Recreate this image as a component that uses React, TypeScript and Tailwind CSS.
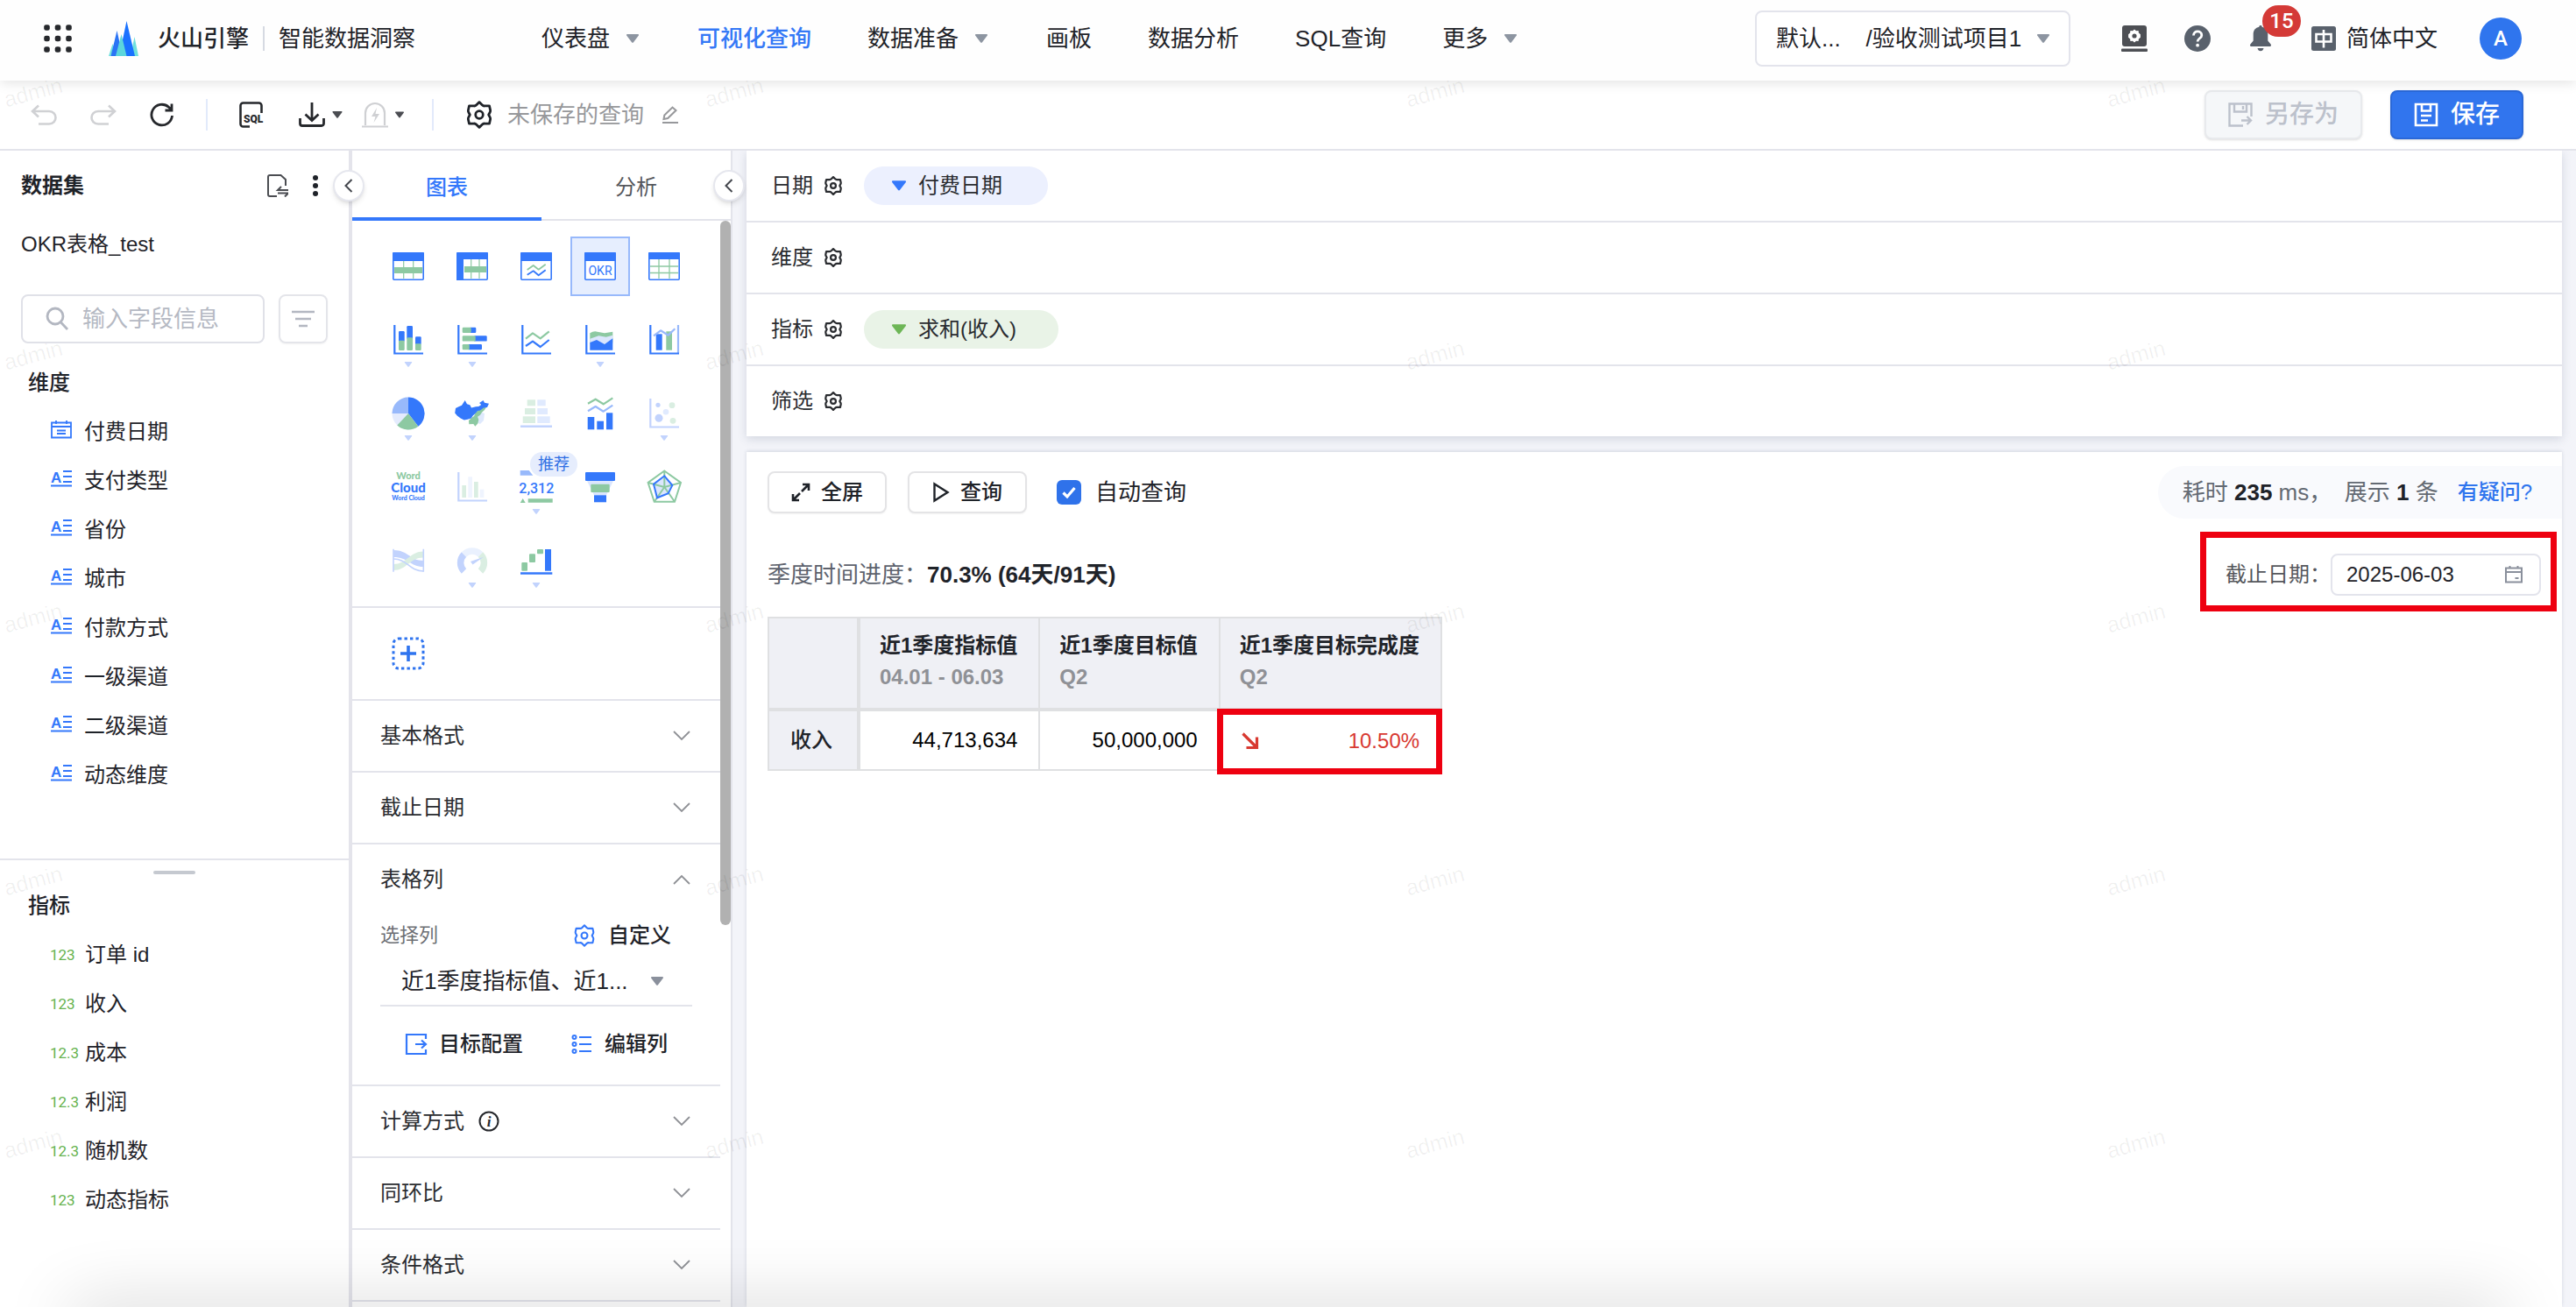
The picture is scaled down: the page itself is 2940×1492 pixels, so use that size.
import React from "react";

const BLUE = "#3478fb";
const GREEN = "#8dc9a2";
const SOFT = "#c2d3fd";
const MID = "#98b9fb";
const PALE_GREEN = "#daeee2";
const PALE_BLUE = "#e0eafe";

/* ---------- small shared icons ---------- */

function Caret({ className = "" }: { className?: string }) {
  return (
    <svg viewBox="0 0 14 10" className={`shrink-0 ${className}`} fill="currentColor" aria-hidden="true">
      <path d="M1 0h12c.9 0 1.3 1 .7 1.700L7.800 9.400c-.4.5-1.200.5-1.600 0L.3 1.700C-.3 1 .1 0 1 0z" />
    </svg>
  );
}

function Gear({ className = "", stroke = 2.4 }: { className?: string; stroke?: number }) {
  return (
    <svg viewBox="0 0 30 30" className={`shrink-0 ${className}`} fill="none" stroke="currentColor" strokeWidth={stroke} strokeLinejoin="round" aria-hidden="true">
      <path d="M12 4.500 15 1.500l3 3c.8.800 1.700 1.200 2.800 1.100l5-.100 1 4.500c.2 1 .1 1.600-.4 2.400L25 15l1.400 2.600c.5.8.6 1.400.4 2.400l-1 4.500-5-.1c-1.100-.1-2 .3-2.800 1.100l-3 3-3-3c-.8-.8-1.700-1.200-2.800-1.100l-5 .1-1-4.500c-.2-1-.1-1.600.4-2.400L5 15l-1.400-2.600c-.5-.8-.6-1.400-.4-2.400l1-4.500 5 .1c1.100.1 2-.3 2.800-1.100z" />
      <circle cx="15" cy="15" r="4" />
    </svg>
  );
}

function Chevron({ up = false }: { up?: boolean }) {
  return (
    <svg viewBox="0 0 20 12" className="h-3 w-5" fill="none" stroke="#8f9196" strokeWidth="1.800" aria-hidden="true">
      <path d={up ? "M1 11 10 2l9 9" : "M1 1l9 9 9-9"} />
    </svg>
  );
}

function Collapse({ label }: { label: string }) {
  return (
    <button aria-label={label} className="flex size-9 items-center justify-center rounded-full border-2 border-[#e6e7ee] bg-white shadow-md">
      <svg viewBox="0 0 10 16" className="h-4 w-2.5" fill="none" stroke="#43464d" strokeWidth="2">
        <path d="M8.500 1 1.500 8l7 7" />
      </svg>
    </button>
  );
}

/* ---------- header ---------- */

function Header() {
  const items = [
    { text: "仪表盘", menu: true },
    { text: "可视化查询", active: true },
    { text: "数据准备", menu: true },
    { text: "画板" },
    { text: "数据分析" },
    { text: "SQL查询" },
    { text: "更多", menu: true },
  ];
  return (
    <header className="relative z-20 flex h-[92px] shrink-0 items-center bg-[#fefefe] pr-[62px] pb-1 pl-[50px] text-[26px] leading-9 text-[#1f2329] shadow-[0_2px_14px_rgba(0,0,0,0.12)]">
      <button aria-label="应用">
        <svg viewBox="0 0 32 32" className="size-8" fill="#26282c">
          {[3.500, 16, 28.500].map((y) => [3.500, 16, 28.500].map((x) => <rect key={`${x}-${y}`} x={x - 3.300} y={y - 3.300} width="6.600" height="6.600" rx="2.400" />))}
        </svg>
      </button>
      <svg viewBox="0 0 34 40" className="ml-[42px] h-10 w-[34px]" aria-hidden="true">
        <path d="M0 40 4.500 26 9 40z" fill="#6fe0dd" />
        <path d="M25 40 29.500 18 34 40z" fill="#6fe0dd" />
        <path d="M2.500 40 9.500 11 16 40z" fill="#2b74f5" />
        <path d="M12 40 20.500 0 30 40z" fill="#1a72ff" />
        <path d="M8 40 14.500 15 20.500 40z" fill="#5cd6dc" />
      </svg>
      <span className="ml-[22px] font-medium">火山引擎</span>
      <span className="mx-4 h-7 w-0.5 bg-[#d6dae2]" />
      <span>智能数据洞察</span>
      <nav className="ml-36 flex items-center gap-16">
        {items.map((it) => (
          <a key={it.text} href="#" className={it.active ? "font-medium text-[#3478f6]" : ""}>
            <span className="flex items-center">
              {it.text}
              {it.menu && <Caret className="mr-[3px] ml-[19px] h-2.5 w-3.5 text-[#8d95a1]" />}
            </span>
          </a>
        ))}
      </nav>
      <div className="relative ml-auto flex items-center">
        <select aria-label="项目" className="h-16 w-[360px] appearance-none rounded-lg border-2 border-[#e3e4ec] bg-white pl-[22px]">
          <option>默认...{"\u00a0\u00a0\u00a0\u00a0"}/验收测试项目1</option>
        </select>
        <Caret className="pointer-events-none absolute right-6 h-2.5 w-3.5 text-[#8d95a1]" />
      </div>
      <button aria-label="系统设置" className="ml-[58px]">
        <svg viewBox="0 0 30 30" className="size-[30px]" fill="#4d4f54">
          <rect x="1" y="0" width="28" height="24" rx="3" />
          <rect x="0" y="26.500" width="30" height="3.500" rx="1" />
          <path d="m15 4.500 2 1.700 2.600-.2.300 2.600 2 1.700v3.400l-2 1.700-.3 2.600-2.600-.2-2 1.700-2-1.700-2.600.2-.3-2.600-2-1.700v-3.400l2-1.700.3-2.600 2.600.2z" fill="#fff" />
          <circle cx="15" cy="12" r="2.600" />
        </svg>
      </button>
      <button aria-label="帮助" className="ml-[42px]">
        <svg viewBox="0 0 30 30" className="size-[30px]">
          <circle cx="15" cy="15" r="15" fill="#59616c" />
          <path d="M10.500 11.500c0-6.300 9.300-5.800 9.300-.3 0 3.600-4.700 3.500-4.700 7.300" fill="none" stroke="#fff" strokeWidth="2.800" />
          <circle cx="15.100" cy="22.700" r="1.900" fill="#fff" />
        </svg>
      </button>
      <button aria-label="通知" className="relative ml-[43px]">
        <svg viewBox="0 0 28 30" className="h-[30px] w-7" fill="#59616c">
          <path d="M14 0c1 0 1.700.7 1.700 1.700 4.300.9 6.600 4 6.600 8.300v7.500l3.500 4.200c.5.700 0 2.300-.9 2.300H3.100c-.9 0-1.400-1.600-.9-2.300l3.500-4.200V10c0-4.300 2.300-7.400 6.600-8.300C12.300.7 13 0 14 0z" />
          <path d="M10.500 26h7c-.4 2-1.700 3.300-3.500 3.300S10.900 28 10.500 26z" />
        </svg>
        <span className="absolute -top-[23px] left-4 flex h-9 w-11 items-center justify-center rounded-full bg-[#d43a37] font-['Roboto'] text-2xl font-medium text-white">15</span>
      </button>
      <button className="ml-11 flex items-center">
        <svg viewBox="0 0 28 28" className="size-7">
          <rect width="28" height="28" rx="2.500" fill="#59616c" />
          <path d="M5.500 9h17v8.500h-17zM14 4v20.500" fill="none" stroke="#fff" strokeWidth="2.600" />
        </svg>
        <span className="ml-3">简体中文</span>
      </button>
      <button className="ml-12 flex size-12 items-center justify-center rounded-full bg-[#2f75ee] font-['Roboto'] text-2xl font-medium text-white">A</button>
    </header>
  );
}

/* ---------- toolbar ---------- */

function Toolbar() {
  return (
    <div className="z-10 flex h-20 shrink-0 items-center border-b-2 border-[#e3e4eb] bg-white pr-[60px] pl-[35px] text-[26px] leading-9">
      <button aria-label="撤销">
        <svg viewBox="0 0 30 24" className="h-6 w-[30px]" fill="none" stroke="#d0d1d4" strokeWidth="2.600">
          <path d="M9 1.500 2 8l7 6.500M2 8h19c10 0 10 14.500 0 14.500H9" />
        </svg>
      </button>
      <button aria-label="重做" className="ml-[38px]">
        <svg viewBox="0 0 30 24" className="h-6 w-[30px]" fill="none" stroke="#d0d1d4" strokeWidth="2.600">
          <path d="m21 1.500 7 6.500-7 6.500M28 8H9c-10 0-10 14.500 0 14.500h12" />
        </svg>
      </button>
      <button aria-label="刷新" className="ml-[38px]">
        <svg viewBox="0 0 28 28" className="size-7" fill="none" stroke="#26282c" strokeWidth="2.800">
          <path d="M25.500 15A11.800 11.800 0 1 1 21.500 5.200L24.500 8M25 1.500V9h-7.500" />
        </svg>
      </button>
      <span className="mx-9 h-9 w-0.5 bg-[#e2eafb]" />
      <button aria-label="SQL">
        <svg viewBox="0 0 30 30" className="size-[30px]" fill="none" stroke="#26282c" strokeWidth="2.600">
          <path d="M12 28.500H4.500a3 3 0 0 1-3-3v-21a3 3 0 0 1 3-3h18a3 3 0 0 1 3 3V13" />
          <text x="5" y="24" fill="#26282c" stroke="none" fontFamily="Roboto" fontWeight="900" fontSize="12">SQL</text>
        </svg>
      </button>
      <button aria-label="下载" className="ml-[38px] flex items-center">
        <svg viewBox="0 0 30 28" className="h-7 w-[30px]" fill="none" stroke="#26282c" strokeWidth="2.800">
          <path d="M15 0v20M7.500 13.500l7.500 7 7.500-7M1.500 18v6a2.500 2.500 0 0 0 2.500 2.500h22a2.500 2.500 0 0 0 2.500-2.500v-6" />
        </svg>
        <Caret className="ml-2 h-2 w-3 text-[#4b4d52]" />
      </button>
      <button aria-label="预警" className="ml-[22px] flex items-center">
        <svg viewBox="0 0 30 30" className="size-[30px]" fill="none" stroke="#cfd0d3" strokeWidth="2.200">
          <path d="M4 27V13a11 11 0 0 1 22 0v14M0 28.500h30" />
          <path d="m17 7-6 10h4.500L13.500 24l6.500-10h-4.500z" fill="#cfd0d3" stroke="none" />
        </svg>
        <Caret className="ml-2 h-2 w-2.5 text-[#4b4d52]" />
      </button>
      <span className="mr-9 ml-8 h-9 w-0.5 bg-[#e2eafb]" />
      <button aria-label="查询设置"><Gear className="size-8" stroke={2.600} /></button>
      <span className="ml-4 text-[#97989b]">未保存的查询</span>
      <button aria-label="重命名" className="ml-5">
        <svg viewBox="0 0 20 20" className="size-5" fill="none" stroke="#97989b" strokeWidth="2">
          <path d="m2.500 15 .8-4.500L12.500 1.500l4 3.500-9.300 9zM1 19h18" />
        </svg>
      </button>
      <div className="ml-auto flex items-center gap-8 text-[28px] font-medium">
        <button disabled className="flex h-14 w-[180px] items-center justify-center gap-3.5 rounded-lg border-2 border-[#e8eaed] bg-[#f5f7f9] text-[#bcc1cb] shadow-sm">
          <svg viewBox="0 0 28 28" className="size-7" fill="none" stroke="currentColor" strokeWidth="2.400">
            <path d="M17 26.500H1.500v-25h25V16M7 2v8.500h14V2M17 4v4M15 20.500h11M21.500 16l4.500 4.500-4.500 4.500" />
          </svg>
          另存为
        </button>
        <button className="flex h-14 w-[152px] items-center justify-center gap-3.5 rounded-lg border-2 border-[#2b68d8] bg-[#3175ee] text-white shadow-sm">
          <svg viewBox="0 0 28 28" className="size-7" fill="none" stroke="currentColor" strokeWidth="2.600">
            <path d="M2 2h24v24H2zM9 2v7.500h10V2M8 15h12M8 20.500h8" />
          </svg>
          保存
        </button>
      </div>
    </div>
  );
}

/* ---------- dataset panel ---------- */

function DateFieldIcon() {
  return (
    <svg viewBox="0 0 24 24" className="size-6" fill="none" stroke={BLUE} strokeWidth="1.800" aria-hidden="true">
      <path d="M1 3.500h22v17H1zM1 8h22M6 1v4M18 1v4M7 12.500h10M7 16h10" />
    </svg>
  );
}

function TextFieldIcon() {
  return (
    <svg viewBox="0 0 24 24" className="size-6" stroke={BLUE} strokeWidth="1.800" aria-hidden="true">
      <path d="M14 3h10M14 9h10M14 15h10M0 19.500h24" />
      <text x="0" y="15.500" fill={BLUE} stroke="none" fontFamily="Liberation Sans" fontWeight="700" fontSize="17">A</text>
    </svg>
  );
}

function DatasetPanel() {
  const dims = ["付费日期", "支付类型", "省份", "城市", "付款方式", "一级渠道", "二级渠道", "动态维度"];
  const measures = [
    ["123", "订单 id"],
    ["123", "收入"],
    ["12.3", "成本"],
    ["12.3", "利润"],
    ["12.3", "随机数"],
    ["123", "动态指标"],
  ];
  return (
    <aside className="relative flex w-[402px] shrink-0 flex-col border-r-4 border-[#e4e4eb] bg-white">
      <div className="flex h-20 items-center pr-[35px] pl-6">
        <h2 className="font-bold">数据集</h2>
        <button aria-label="切换数据集" className="ml-auto">
          <svg viewBox="0 0 24 26" className="h-[26px] w-6" fill="none" stroke="#4b4d52" strokeWidth="2">
            <path d="M11 25H3a2 2 0 0 1-2-2V3a2 2 0 0 1 2-2h12.500L21 6v7" />
            <path d="M24 18H12l4-4M12 21.500h12l-4 4" />
          </svg>
        </button>
        <button aria-label="更多" className="ml-7">
          <svg viewBox="0 0 6 26" className="h-[26px] w-1.5" fill="#1f2329">
            <circle cx="3" cy="4" r="3" /><circle cx="3" cy="13" r="3" /><circle cx="3" cy="22" r="3" />
          </svg>
        </button>
      </div>
      <div className="flex h-[53px] items-center pl-6">OKR表格_test</div>
      <div className="mt-[31px] flex h-14 gap-4 px-6">
        <label className="flex w-[278px] items-center gap-4 rounded-lg border-2 border-[#e0e1e8] pl-[26px]">
          <svg viewBox="0 0 26 28" className="h-7 w-[26px] shrink-0" fill="none" stroke="#b3b7c1" strokeWidth="2.800">
            <circle cx="11" cy="11" r="9" /><path d="m17.500 18 7.500 8" />
          </svg>
          <input aria-label="搜索字段" placeholder="输入字段信息" className="w-full min-w-0 text-[26px] leading-9 outline-none placeholder:text-[#b5b9c3]" />
        </label>
        <button aria-label="筛选字段" className="flex w-14 items-center justify-center rounded-lg border-2 border-[#e4e5ea] shadow-xs">
          <svg viewBox="0 0 26 20" className="h-5 w-[26px]" stroke="#b3b7c1" strokeWidth="2.600">
            <path d="M0 2h26M4 10h18M8 18h10" />
          </svg>
        </button>
      </div>
      <h3 className="mt-[25px] flex h-10 items-center pl-8 font-medium">维度</h3>
      <ul className="mt-2 pb-[67px]">
        {dims.map((d, i) => (
          <li key={d} className="flex h-14 items-center gap-[14px] pl-[58px]">
            <span className="pb-1">{i === 0 ? <DateFieldIcon /> : <TextFieldIcon />}</span>
            {d}
          </li>
        ))}
      </ul>
      <section className="flex-1 border-t-2 border-[#e3e4eb]">
        <div className="mx-auto mt-3 h-1 w-12 rounded-full bg-[#c5c9d0]" />
        <h3 className="mt-4 flex h-10 items-center pl-8 font-medium">指标</h3>
        <ul className="mt-2">
          {measures.map(([kind, name]) => (
            <li key={name} className="flex h-14 items-center pl-[57px]">
              <span className="w-10 font-['Roboto'] text-[17px] leading-6 text-[#67b34f]">{kind}</span>
              {name}
            </li>
          ))}
        </ul>
      </section>
      <div className="absolute top-[22px] -right-[18px] z-10"><Collapse label="收起数据集" /></div>
    </aside>
  );
}

/* ---------- chart picker ---------- */

function Axis({ color = BLUE }: { color?: string }) {
  return <path d="M4.300 3v32.500H37" fill="none" stroke={color} strokeWidth="2.200" />;
}

function Line({ d, color, w = 2.200 }: { d: string; color: string; w?: number }) {
  return <path d={d} fill="none" stroke={color} strokeWidth={w} strokeLinejoin="round" />;
}

function Frame({ head = 12 }: { head?: number }) {
  return (
    <>
      <rect x="2.800" y="4.800" width="34.400" height="30.400" rx="1" fill="#fff" stroke={BLUE} strokeWidth="1.600" />
      <rect x="2" y="4" width="36" height={head - 4} rx="1" fill={BLUE} />
    </>
  );
}

const charts: { name: string; menu?: boolean; selected?: boolean; tag?: string; art: React.ReactNode }[] = [
  { name: "明细表", art: <><Frame head={14} /><path d="M14.700 14v20M25.700 14v20" stroke={GREEN} strokeWidth="1.200" /><rect x="4" y="21" width="32" height="7" fill={GREEN} /></> },
  { name: "透视表", art: <><Frame /><rect x="2" y="5" width="8" height="31" fill={BLUE} /><path d="M18.700 12v22M28 12v22" stroke={GREEN} strokeWidth="1.200" /><rect x="11" y="20" width="25" height="7" fill={GREEN} /></> },
  { name: "趋势表", art: <><Frame head={14} /><Line d="M9.700 24 16.700 19l6 4.700 8-6" color={GREEN} w={1.800} /><Line d="m9.700 29.700 7-4.400 6 5 8-6" color={BLUE} w={1.800} /></> },
  { name: "OKR表", selected: true, art: <><Frame head={14} /><text x="20" y="30" textAnchor="middle" fontFamily="Roboto" fontSize="14" fill={BLUE}>OKR</text></> },
  { name: "多维表", art: <><Frame /><path d="M4 20h32M4 27.500h32M14 12v22M26 12v22" stroke={GREEN} strokeWidth="1.300" /></> },

  { name: "柱状图", menu: true, art: <><Axis /><g fill={BLUE}><rect x="9" y="10" width="6.700" height="12" rx="1.200" /><rect x="18.300" y="4" width="6.700" height="15" rx="1.200" /><rect x="28" y="16.300" width="6.700" height="9" rx="1.200" /></g><g fill={GREEN}><rect x="9" y="20.700" width="6.700" height="11.300" rx="1.200" /><rect x="18.300" y="17.300" width="6.700" height="14.700" rx="1.200" /><rect x="28" y="24.300" width="6.700" height="7.700" rx="1.200" /></g></> },
  { name: "条形图", menu: true, art: <><Axis /><g fill={BLUE}><rect x="17" y="5.700" width="7.300" height="6.300" rx="1.200" /><rect x="22" y="15.300" width="14.700" height="6.300" rx="1.200" /><rect x="15" y="25" width="16" height="6.300" rx="1.200" /></g><g fill={GREEN}><rect x="8.700" y="5.700" width="10" height="6.300" rx="1.200" /><rect x="8.700" y="15.300" width="15" height="6.300" rx="1.200" /><rect x="8.700" y="25" width="8" height="6.300" rx="1.200" /></g></> },
  { name: "折线图", art: <><Axis /><Line d="m8 18.700 8-6.400 8.700 6 10-8" color={GREEN} /><Line d="m8 27 8-5.300 8.700 6.300 10-8" color={BLUE} /></> },
  { name: "面积图", menu: true, art: <><Axis /><path d="M8.300 12.300q4.500-2.800 8.400-1.600l8.300 1.600 9.300-1.600V23h-26z" fill={GREEN} /><path d="m8.300 18.700 10-3.400 8.400 1.400 7.600-2V25h-26z" fill="#dbe6fd" /><path d="m8.300 23 7.700-3 9 5 9.300-6.700v13.400h-26z" fill={BLUE} /></> },
  { name: "双轴图", art: <><path d="M36 3v32" stroke={MID} strokeWidth="2.200" /><Axis /><rect x="10.700" y="13.300" width="7" height="18.400" fill={BLUE} /><rect x="22.300" y="10.300" width="6.700" height="21.400" fill={GREEN} /><Line d="m8 15.300 8-6 8.700 5.400 7.600-7.400" color={MID} /></> },

  { name: "饼图", menu: true, art: <><circle cx="20" cy="20" r="18.500" fill="#e4ebfd" /><path d="M20 20V1.500A18.500 18.500 0 0 1 31.300 34.700z" fill={BLUE} /><path d="M20 20 31.300 34.700A18.500 18.500 0 0 1 7.300 33.400z" fill={GREEN} /><path d="M20 20H1.500A18.500 18.500 0 0 1 20 1.500z" fill={MID} /></> },
  { name: "地图", menu: true, art: <><path d="m29 18 5 2-1 8-4 4-5-2 1-8z" fill="#dfe9fd" /><path d="m37 11-3 5-3 2.700-2 3-3 2 1.300 3.300-1 4.500-3 3.200-2-2.700-5 .3-.3-4.300 3-3 3-2 2-4.500 5-3.500 4.500-2.500z" fill={GREEN} /><path d="m1 14 4-2 3-1.300L11.700 5l2.300 4.300 3.300 1L19 13.500l5-1.300 3.300-.2 3-2-2.300-2L32.500 5l1.500 2.700 5 1-2 4.300-4 .5-4 3-2.800.5-2.700 3-2.800 2.500-2 3-4 1.300-4 .7-4-2-4-3-2.500-3z" fill={BLUE} /></> },
  { name: "对比图", art: <><g fill={PALE_GREEN}><rect x="9.700" y="4.300" width="9.300" height="7" /><rect x="7" y="14" width="12" height="7" /><rect x="4.700" y="23.300" width="14.300" height="7.700" /></g><g fill={PALE_BLUE}><rect x="21.300" y="4.300" width="9.400" height="7" /><rect x="21.300" y="14" width="11.700" height="7" /><rect x="21.300" y="23.300" width="14.400" height="7.700" /></g><path d="M2 34.700h36" stroke={SOFT} strokeWidth="2.400" /></> },
  { name: "组合图", art: <><Line d="m6 8.700 8.700-5 9 5.600 10.600-7" color={GREEN} /><Line d="m6 17.300 8.700-5.300 9 5.700 10.600-7" color={MID} /><g fill={BLUE}><rect x="5.700" y="24" width="7.600" height="14.300" /><rect x="16.300" y="28.700" width="7.700" height="9.600" /><rect x="27" y="19.300" width="7.300" height="19" /></g></> },
  { name: "散点图", menu: true, art: <><Axis color={SOFT} /><g fill={SOFT}><circle cx="13" cy="10.300" r="2.600" /><circle cx="14" cy="25.300" r="4.500" /></g><circle cx="22" cy="18.300" r="3.300" fill={PALE_BLUE} /><g fill={PALE_GREEN}><circle cx="29" cy="10.700" r="3.400" /><circle cx="30" cy="28.300" r="3.400" /></g></> },

  { name: "词云", art: <g fontFamily="Lato" fontWeight="900" textAnchor="middle"><text x="20" y="10.500" fontSize="11" fill={GREEN}>Word</text><text x="20" y="26" fontSize="15" fill={BLUE}>Cloud</text><text x="20" y="35" fontSize="7" fill={BLUE}>Word Cloud</text></g> },
  { name: "直方图", art: <><Axis color={SOFT} /><g fill={PALE_GREEN}><rect x="8.300" y="18" width="4.700" height="14" /><rect x="22" y="14" width="4.700" height="18" /></g><g fill="#eff4fe"><rect x="15.300" y="8.300" width="4.700" height="23.700" /><rect x="28.700" y="22.700" width="4.700" height="9.300" /></g></> },
  { name: "指标卡", menu: true, tag: "推荐", art: <><path d="M1.700 1h10l4.600 5.700H1.700z" fill={MID} /><text x="20.300" y="26.500" textAnchor="middle" fontFamily="Roboto" fontWeight="500" fontSize="16" fill={BLUE}>2,312</text><path d="m1.700 38 3-5 3 5zM10.700 33.300h28v4.400h-28z" fill={GREEN} /></> },
  { name: "漏斗图", art: <><path d="M5 13h30l-8 16.300H13z" fill="#dbe6fd" /><rect x="3" y="3" width="34" height="10" rx="1" fill={BLUE} /><rect x="9.300" y="16.700" width="21.400" height="9.300" rx="1" fill={GREEN} /><rect x="13" y="29.300" width="14" height="8" fill={BLUE} /></> },
  { name: "雷达图", art: <><path d="m20.300 7.300 9 10.700-4.600 9.300-12.700 5-4-15.600z" fill="#dbe6fd" /><path d="M20.300 1.500 39 15l-7 21.700H8.700L1.600 15zM20.300 20V1.500M20.300 20 39 15M20.300 20 32 36.700M20.300 20 8.700 36.700M20.300 20 1.600 15" fill="none" stroke={GREEN} strokeWidth="2" /><path d="m20.300 7.300 9 10.700-4.600 9.300-12.700 5-4-15.600z" fill="none" stroke={BLUE} strokeWidth="2" /></> },

  { name: "桑基图", art: <><path d="M3 8C20 8 22 20 37.300 20v7C22 27 20 16 3 16z" fill={SOFT} /><path d="M3 24C18 24 22 9.500 37.300 9.500v7C22 16.500 18 31 3 31z" fill={PALE_GREEN} /><path d="M3 18c16 0 18 14 34.300 14" fill="none" stroke={SOFT} strokeWidth="1.600" /><path d="M3 6.700v26M37.300 6.700v26" stroke={SOFT} strokeWidth="1.600" /></> },
  { name: "仪表盘图", menu: true, art: <g fill="none" strokeWidth="7.500"><path d="M10.500 32a13.500 13.500 0 0 1 0-19" stroke={SOFT} /><path d="M10.500 13a13.500 13.500 0 0 1 19 0" stroke="#eaf1fe" /><path d="M29.500 13a13.500 13.500 0 0 1 0 19" stroke={PALE_GREEN} /><path d="m18 21 15-5.300L20.500 24.500z" fill={SOFT} stroke="none" /></g> },
  { name: "瀑布图", menu: true, art: <><g fill={GREEN}><rect x="3.300" y="22" width="6.700" height="9.700" rx="1" /><rect x="12" y="12.300" width="7" height="9.700" rx="1" /><rect x="21" y="7" width="7" height="5.300" rx="1" /></g><rect x="30" y="7" width="7" height="24.700" fill={BLUE} /><path d="M2 34.500h36.300" stroke={BLUE} strokeWidth="2.400" /></> },
];

function SectionRow({ title, info, open }: { title: string; info?: boolean; open?: boolean }) {
  return (
    <button aria-expanded={!!open} className={`flex w-full items-center pr-[34px] pl-8 text-[#2a2c30] ${open ? "h-20" : "h-[82px]"}`}>
      {title}
      {info && (
        <svg viewBox="0 0 24 24" className="ml-4 size-6" fill="none" stroke="#26282c" strokeWidth="2">
          <circle cx="12" cy="12" r="10.500" />
          <text x="12" y="18" textAnchor="middle" fill="#26282c" stroke="none" fontFamily="Liberation Serif" fontStyle="italic" fontWeight="700" fontSize="17">i</text>
        </svg>
      )}
      <span className="ml-auto"><Chevron up={open} /></span>
    </button>
  );
}

function ChartPanel() {
  return (
    <aside className="relative flex w-[434px] shrink-0 flex-col border-r-2 border-[#e3e4eb] bg-white">
      <div role="tablist" className="flex h-20 shrink-0 border-b-2 border-[#e3e4eb]">
        <button role="tab" aria-selected="true" className="-mb-0.5 flex-1 border-b-4 border-[#3478fb] pt-2 font-medium text-[#3478fb]">图表</button>
        <button role="tab" aria-selected="false" className="flex-1 pt-1.5 text-[#55575c]">分析</button>
      </div>
      <div className="flex min-h-0 flex-1">
        <div className="min-w-0 flex-1 divide-y-2 divide-[#e3e4eb] overflow-hidden">
          <div className="grid grid-cols-[repeat(5,73px)] pt-2.5 pb-2.5 pl-[27px]">
            {charts.map((c) => (
              <button key={c.name} aria-label={c.name} aria-pressed={!!c.selected} className="relative flex h-[84px] items-center justify-center">
                <span className={c.selected ? "flex size-[68px] items-center justify-center border-2 border-[#98b9fb] bg-[#e6eefe]" : "flex size-[68px] items-center justify-center"}>
                  <svg viewBox="0 0 40 40" className="size-10 overflow-visible" aria-hidden="true">{c.art}</svg>
                </span>
                {c.menu && <Caret className="absolute top-[67px] h-1.5 w-2.5 text-[#c2d3fd]" />}
                {c.tag && <span className="absolute top-0.5 left-[30px] rounded-full bg-[#e6edfd] px-[9px] text-lg leading-7 whitespace-nowrap text-[#2f6fe4]">{c.tag}</span>}
              </button>
            ))}
          </div>
          <div className="flex h-[106px] items-center pl-11">
            <button aria-label="添加图表">
              <svg viewBox="0 0 40 40" className="size-10" fill="none" stroke="#2f74ef">
                <rect x="3" y="3" width="34" height="34" rx="6" strokeWidth="3" strokeDasharray="3.400 3.100" />
                <path d="M20 11v18M11 20h18" strokeWidth="3.600" />
              </svg>
            </button>
          </div>
          <SectionRow title="基本格式" />
          <SectionRow title="截止日期" />
          <section>
            <SectionRow title="表格列" open />
            <div className="px-8">
              <div className="flex h-12 items-center">
                <label htmlFor="columns" className="text-[22px] text-[#6d6f74]">选择列</label>
                <button className="ml-auto flex items-center gap-[14px] pr-[24px] font-medium text-[#1f2329]">
                  <Gear className="size-[26px] text-[#3478fb]" />
                  自定义
                </button>
              </div>
              <div className="relative flex h-[57px] items-center border-b-2 border-[#e3e4eb]">
                <select id="columns" className="w-full appearance-none bg-transparent pl-6 text-[26px] leading-9">
                  <option>近1季度指标值、近1...</option>
                </select>
                <Caret className="pointer-events-none absolute right-8 h-2.5 w-4 text-[#8a909c]" />
              </div>
              <div className="flex h-[89px] items-center pr-[28px] pb-1 pl-7 font-medium text-[#1f2329]">
                <button className="flex items-center gap-[13px]">
                  <svg viewBox="0 0 26 26" className="size-[26px]" fill="none" stroke="#3478fb" strokeWidth="2.200">
                    <path d="M24 7V2H2v22h22v-5M12 13h12M19 8.500l5 4.500-5 4.500" />
                  </svg>
                  目标配置
                </button>
                <button className="ml-auto flex items-center gap-3.5">
                  <svg viewBox="0 0 24 24" className="size-6" fill="none" stroke="#3478fb" strokeWidth="2">
                    <circle cx="3.500" cy="4" r="2" /><circle cx="3.500" cy="12" r="2" /><circle cx="3.500" cy="20" r="2" />
                    <path d="M9 4h14M9 12h14M9 20h14" />
                  </svg>
                  编辑列
                </button>
              </div>
            </div>
          </section>
          <SectionRow title="计算方式" info />
          <SectionRow title="同环比" />
          <SectionRow title="条件格式" />
          <div className="h-20" />
        </div>
        <div className="h-[804px] w-3 rounded-md bg-[#b1b1b1]" />
      </div>
      <div className="absolute top-[22px] -right-4 z-10"><Collapse label="收起图表" /></div>
    </aside>
  );
}

/* ---------- query area ---------- */

function Shelf({ label, children }: { label: string; children?: React.ReactNode }) {
  return (
    <div className="flex h-[82px] items-center pl-7 text-[#2a2c30] last:h-20">
      {label}
      <button aria-label={`${label}设置`} className="mr-6 ml-3"><Gear className="size-[22px]" stroke={3} /></button>
      {children}
    </div>
  );
}

function Results() {
  const heads = [
    ["近1季度指标值", "04.01 - 06.03"],
    ["近1季度目标值", "Q2"],
    ["近1季度目标完成度", "Q2"],
  ];
  return (
    <table className="mt-[30px] border-separate border-spacing-0 border-t-2 border-l-2 border-[#dfe0e2] leading-9">
      <thead>
        <tr className="h-[106px] bg-[#eff0f5] text-left align-top">
          <td className="w-[104px] border-r-4 border-b-4 border-[#dfe0e2]" />
          {heads.map(([a, b]) => (
            <th key={a} scope="col" className="border-r-2 border-b-4 border-[#dfe0e2] pt-[13px] pr-6 pl-[22px] font-bold">
              {a}
              <span className="block text-[#8f9196]">{b}</span>
            </th>
          ))}
        </tr>
      </thead>
      <tbody>
        <tr className="h-[68px] text-right">
          <th scope="row" className="border-r-4 border-b-2 border-[#dfe0e2] bg-[#eff0f5] pr-1 text-center font-medium">收入</th>
          <td className="border-r-2 border-b-2 border-[#dfe0e2] pr-6 text-black">44,713,634</td>
          <td className="border-r-2 border-b-2 border-[#dfe0e2] pr-6 text-black">50,000,000</td>
          <td className="relative pr-[26px] pl-6 text-[#d83931]">
            <span className="pointer-events-none absolute -top-[3px] right-0 -bottom-1 -left-1 border-[7px] border-[#ee0010]" />
            <span className="flex items-center justify-between">
              <svg viewBox="0 0 20 20" className="size-5" fill="none" stroke="currentColor" strokeWidth="3.200" aria-label="下降">
                <path d="m1.500 1.500 15 15M17.500 5.500v12h-12" />
              </svg>
              10.50%
            </span>
          </td>
        </tr>
      </tbody>
    </table>
  );
}

function Workspace() {
  const button = "flex h-12 w-[136px] items-center justify-center gap-3 rounded-lg border-2 border-[#e4e4e6] bg-white font-medium shadow-xs";
  return (
    <main className="flex min-w-0 flex-1 flex-col bg-[#f3f4f9] pr-4 pl-4">
      <section className="divide-y-2 divide-[#e3e4eb] bg-white shadow-[0_3px_10px_rgba(60,75,110,0.18)]">
        <Shelf label="日期">
          <button className="flex h-11 items-center gap-3.5 rounded-full bg-[#ecf0fe] pr-[52px] pl-8">
            <Caret className="h-3 w-4 text-[#3478fb]" />付费日期
          </button>
        </Shelf>
        <Shelf label="维度" />
        <Shelf label="指标">
          <button className="flex h-11 items-center gap-3.5 rounded-full bg-[#e9f3e7] pr-12 pl-8">
            <Caret className="h-3 w-4 text-[#6db656]" />求和(收入)
          </button>
        </Shelf>
        <Shelf label="筛选" />
      </section>
      <section className="mt-[18px] flex-1 bg-white shadow-[0_-1px_4px_rgba(60,75,110,0.18)]">
        <div className="flex items-center pt-4 pl-6">
          <button className={button}>
            <svg viewBox="0 0 22 22" className="size-[22px]" fill="none" stroke="currentColor" strokeWidth="2.600">
              <path d="M13 2h7v7M19.500 2.500l-7.500 7.500M9 20H2v-7M2.500 19.500 10 12" />
            </svg>
            全屏
          </button>
          <button className={`${button} ml-6`}>
            <svg viewBox="0 0 20 24" className="h-6 w-5" fill="none" stroke="currentColor" strokeWidth="2.400">
              <path d="M2.500 2.500v19L17.500 12z" />
            </svg>
            查询
          </button>
          <label className="ml-[34px] flex items-center text-[26px] leading-9">
            <span className="relative flex size-7">
              <input type="checkbox" defaultChecked className="size-7 appearance-none rounded-md bg-[#2f72ea]" />
              <svg viewBox="0 0 28 28" className="pointer-events-none absolute inset-0" fill="none" stroke="#fff" strokeWidth="3.200">
                <path d="m7.500 14.500 4.500 4.500 8.500-10" />
              </svg>
            </span>
            <span className="ml-4">自动查询</span>
          </label>
          <div className="ml-auto flex h-[60px] items-center rounded-l-full bg-[#f9fafd] pr-[34px] pl-7 text-[26px] leading-9 whitespace-pre text-[#646a73]">
            耗时 <b className="text-[#1f2329]">235</b> ms，  展示 <b className="text-[#1f2329]">1</b> 条
            <a href="#" className="ml-[22px] text-2xl font-medium text-[#2f75ee]">有疑问?</a>
          </div>
        </div>
        <div className="mt-[15px] flex items-center justify-between pr-1.5 pl-6">
          <p className="pt-[7px] text-[26px] leading-9 text-[#5d626d]">
            季度时间进度：<b className="text-[#1f2329]">70.3% (64天/91天)</b>
          </p>
          <div className="flex h-[91px] items-center border-[7px] border-[#ee0010] pt-[7px] pr-[11px] pl-[22px] text-[#55575c]">
            <label htmlFor="deadline">截止日期：</label>
            <div className="flex h-12 w-60 items-center rounded-lg border-2 border-[#e3e4ec] pr-[18px] pl-4">
              <input id="deadline" defaultValue="2025-06-03" className="w-full min-w-0 text-[#1f2329] outline-none" />
              <svg viewBox="0 0 22 22" className="size-[22px] shrink-0" fill="none" stroke="#8a909c" strokeWidth="2" aria-hidden="true">
                <path d="M2 3.500h18v16H2zM2 8h18M6.500 1v3M15.500 1v3M12.500 15h4" />
              </svg>
            </div>
          </div>
        </div>
        <div className="-mt-[24px] pl-6"><Results /></div>
      </section>
    </main>
  );
}

function Watermarks() {
  return (
    <div aria-hidden="true" className="pointer-events-none absolute inset-x-0 top-[90px] bottom-0 z-10 grid auto-rows-[300px] grid-cols-[repeat(4,800px)] text-[25px] font-light text-black/6">
      {Array.from({ length: 20 }, (_, i) => (
        <span key={i} className="flex h-8 w-[76px] -rotate-15 items-center justify-center">admin</span>
      ))}
    </div>
  );
}

export default function App() {
  return (
    <div className="relative flex h-screen flex-col overflow-hidden bg-white font-['Liberation_Sans','Noto_Sans_CJK_SC',sans-serif] text-2xl text-[#1f2329]">
      <Header />
      <Toolbar />
      <div className="flex min-h-0 flex-1">
        <DatasetPanel />
        <ChartPanel />
        <Workspace />
      </div>
      <Watermarks />
      <div aria-hidden="true" className="pointer-events-none absolute inset-x-20 top-full h-10 shadow-[0_0_80px_rgba(0,0,0,0.2)]" />
    </div>
  );
}
